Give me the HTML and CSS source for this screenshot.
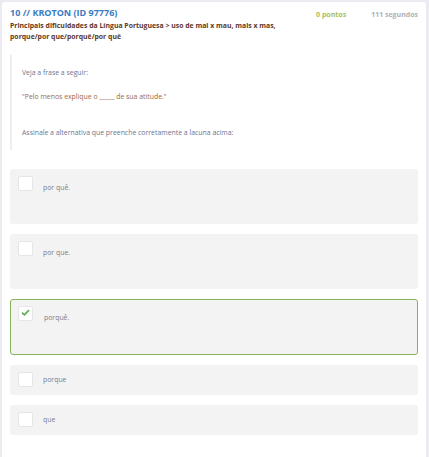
FILE: index.html
```html
<!DOCTYPE html>
<html>
<head>
<meta charset="utf-8">
<link rel="stylesheet" href="styles.css">
</head>
<body>
<div class="card">
  <div class="header">
    <div class="titles">
      <div class="title">10 // KROTON (ID 97776)</div>
      <div class="subtitle">Principais dificuldades da Língua Portuguesa &gt; uso de mal x mau, mais x mas, porque/por que/porquê/por quê</div>
    </div>
    <div class="meta">
      <span class="points">0 pontos</span>
      <span class="time">111 segundos</span>
    </div>
  </div>
  <div class="quote">
    <p class="plain">Veja a frase a seguir:</p>
    <p class="accent">"Pelo menos explique o _____ de sua atitude."</p>
    <p class="plain spaced">Assinale a alternativa que preenche corretamente a lacuna acima:</p>
  </div>
  <div class="options">
    <div class="option tall"><span class="box"></span><span class="label">por quê.</span></div>
    <div class="option tall"><span class="box"></span><span class="label">por que.</span></div>
    <div class="option tall selected"><span class="box"><svg width="9" height="7" viewBox="0 0 9 7"><path d="M1 3.6 L3.4 5.8 L8 1.2" fill="none" stroke="#5fb053" stroke-width="1.8"/></svg></span><span class="label">porquê.</span></div>
    <div class="option"><span class="box"></span><span class="label">porque</span></div>
    <div class="option"><span class="box"></span><span class="label">que</span></div>
  </div>
</div>
</body>
</html>
```
FILE: styles.css
```css
* { box-sizing: border-box; }
html, body { margin: 0; padding: 0; }
body {
  background: #ebebf1;
  font-family: "Open Sans", "Liberation Sans", sans-serif;
  padding: 2px 3px 0 2px;
  height: 457px;
  overflow: hidden;
}
.card {
  background: #fff;
  border-radius: 3px 3px 0 0;
  padding: 5px 8px 20px 8px;
  min-height: 455px;
}
.header {
  display: flex;
  justify-content: space-between;
  align-items: flex-start;
}
.titles { width: 295px; }
.title {
  color: #3a7cc2;
  font-weight: 700;
  font-size: 9px;
  line-height: 12px;
}
.subtitle {
  color: #5e3826;
  font-weight: 700;
  font-size: 6.9px;
  line-height: 11px;
  margin-top: 1px;
}
.meta {
  display: flex;
  gap: 25px;
  font-size: 7px;
  font-weight: 700;
  padding-top: 3px;
}
.points { color: #a6c063; }
.time { color: #b0b0b4; }
.quote {
  margin-top: 13px;
  border-left: 2px solid #eeeeef;
  padding: 12px 0 8px 10px;
  height: 95px;
}
.quote p {
  margin: 0;
  font-size: 6.9px;
  line-height: 12px;
}
.quote p + p { margin-top: 11.5px; }
.quote p.spaced { margin-top: 24.5px; }
.plain { color: #6b7590; }
.accent { color: #9c6a46; }
.options {
  margin-top: 19px;
  display: flex;
  flex-direction: column;
  gap: 10px;
}
.option {
  background: #f3f3f3;
  border-radius: 3px;
  height: 30px;
  display: flex;
  align-items: flex-start;
  padding: 6px 0 0 7px;
  border: 1px solid transparent;
}
.option.tall { height: 55px; }
.option.selected { border-color: #88b35d; height: 56px; }
.box {
  width: 15px;
  height: 15px;
  background: #fff;
  border: 1px solid #e6e6e6;
  border-radius: 2px;
  flex: none;
  display: flex;
  align-items: center;
  justify-content: center;
}
.box svg { margin-top: -3px; margin-left: -1px; }
.label {
  margin-left: 10px;
  margin-top: 4px;
  font-size: 6.9px;
  line-height: 8px;
  color: #7a8090;
}
.tall .label { margin-top: 8px; }
.selected .label { margin-left: 11px; }
```
